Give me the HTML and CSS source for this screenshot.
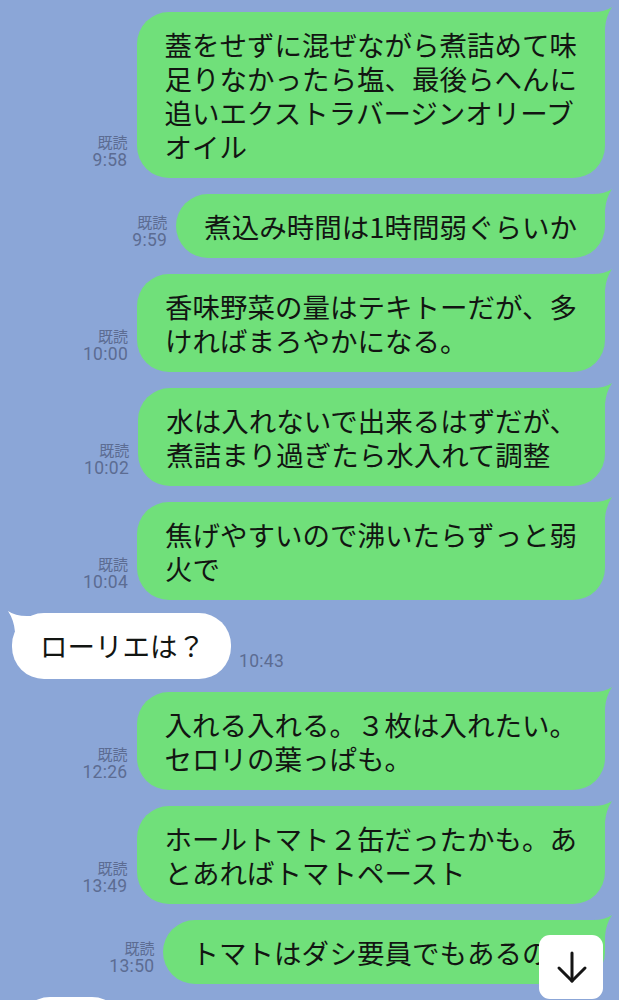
FILE: index.html
```html
<!DOCTYPE html>
<html lang="ja">
<head>
<meta charset="utf-8">
<title>LINE</title>
<link rel="stylesheet" href="styles.css">
</head>
<body>
<div class="chat">
  <div class="row out">
    <div class="meta"><span class="read">既読</span><span class="time">9:58</span></div>
    <div class="bubble green">蓋をせずに混ぜながら煮詰めて味<br>足りなかったら塩、最後らへんに<br>追いエクストラバージンオリーブ<br>オイル</div>
  </div>
  <div class="row out">
    <div class="meta"><span class="read">既読</span><span class="time">9:59</span></div>
    <div class="bubble green">煮込み時間は1時間弱ぐらいか</div>
  </div>
  <div class="row out">
    <div class="meta"><span class="read">既読</span><span class="time">10:00</span></div>
    <div class="bubble green">香味野菜の量はテキトーだが、多<br>ければまろやかになる。</div>
  </div>
  <div class="row out">
    <div class="meta"><span class="read">既読</span><span class="time">10:02</span></div>
    <div class="bubble green">水は入れないで出来るはずだが、<br>煮詰まり過ぎたら水入れて調整</div>
  </div>
  <div class="row out">
    <div class="meta"><span class="read">既読</span><span class="time">10:04</span></div>
    <div class="bubble green">焦げやすいので沸いたらずっと弱<br>火で</div>
  </div>
  <div class="row in">
    <div class="bubble white">ローリエは？</div>
    <div class="meta"><span class="time">10:43</span></div>
  </div>
  <div class="row out">
    <div class="meta"><span class="read">既読</span><span class="time">12:26</span></div>
    <div class="bubble green">入れる入れる。３枚は入れたい。<br>セロリの葉っぱも。</div>
  </div>
  <div class="row out">
    <div class="meta"><span class="read">既読</span><span class="time">13:49</span></div>
    <div class="bubble green">ホールトマト２缶だったかも。あ<br>とあればトマトペースト</div>
  </div>
  <div class="row out">
    <div class="meta"><span class="read">既読</span><span class="time">13:50</span></div>
    <div class="bubble green">トマトはダシ要員でもあるの。</div>
  </div>
  <div class="row in">
    <div class="bubble white stub"></div>
  </div>
</div>
<button class="scroll-down" aria-label="最新のメッセージへ">
  <svg width="64" height="64" viewBox="0 0 64 64" fill="none" stroke="#151515" stroke-width="3" stroke-linecap="round" stroke-linejoin="round">
    <path d="M33 18 V46"/>
    <path d="M20 33 L33 46 L46 33"/>
  </svg>
</button>
</body>
</html>
```

FILE: styles.css
```css
html, body {
  margin: 0;
  padding: 0;
  background: #8ba6d7;
  overflow: hidden;
}

body {
  width: 619px;
  height: 1000px;
  font-family: "Noto Sans CJK JP", "Noto Sans", sans-serif;
}

.chat {
  display: flex;
  flex-direction: column;
  gap: 16px;
  padding: 12px 14px 0 12px;
}

.row {
  display: flex;
  align-items: flex-end;
}

.row.out {
  justify-content: flex-end;
  gap: 9px;
}

.row.in {
  justify-content: flex-start;
  gap: 8px;
  margin: -3px 0;
}

.meta {
  display: flex;
  flex-direction: column;
  align-items: flex-end;
  padding-bottom: 8px;
  color: #5c6c92;
}

.read {
  font-family: "Noto Sans CJK JP", sans-serif;
  font-size: 15px;
  line-height: 18px;
}

.time {
  font-family: Roboto, "Liberation Sans", sans-serif;
  font-size: 17.5px;
  line-height: 19px;
  letter-spacing: 0.3px;
}

.bubble {
  position: relative;
  z-index: 0;
  border-radius: 32px;
  padding: 15px 28px;
  font-family: "Noto Sans CJK JP", sans-serif;
  font-size: 27.5px;
  line-height: 34px;
  color: #121512;
  white-space: nowrap;
}

.bubble::before {
  content: "";
  position: absolute;
  z-index: -1;
  top: -6px;
  width: 38px;
  height: 40px;
  background: inherit;
  clip-path: path("M0 6 L18 6 Q30 6 37 1 Q31 10 30 22 L30 40 L0 40 Z");
}

.green {
  background: #70e07a;
}

.green::before {
  right: -8px;
}

.white {
  background: #ffffff;
  padding: 15px 26px 17px 28px;
}

.white::before {
  left: -5px;
  top: -3px;
  transform: scaleX(-1);
}

.stub {
  width: 52px;
  height: 34px;
  margin-left: 6px;
}

.stub::before {
  display: none;
}

.scroll-down {
  position: fixed;
  right: 16px;
  bottom: 1px;
  width: 64px;
  height: 64px;
  padding: 0;
  border: none;
  border-radius: 11px;
  background: #ffffff;
  display: flex;
  align-items: center;
  justify-content: center;
}
```
